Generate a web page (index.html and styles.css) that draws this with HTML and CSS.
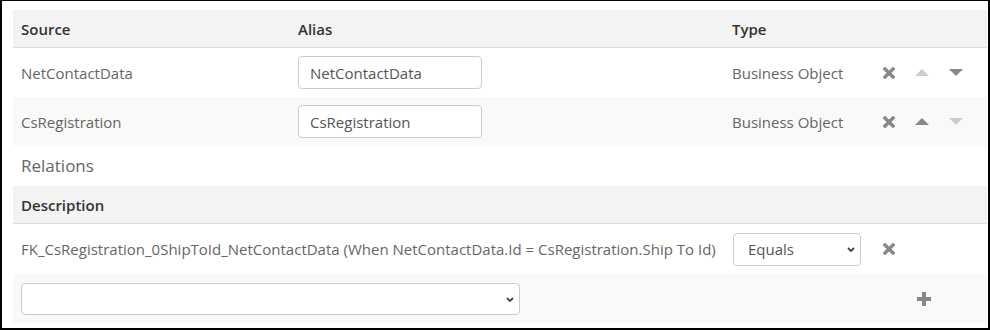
FILE: index.html
```html
<!DOCTYPE html>
<html lang="en">
<head>
    <meta charset="UTF-8" />
    <meta name="viewport" content="width=device-width, initial-scale=1" />
    <title>Sources and Relations</title>
    <link rel="stylesheet" href="styles.css">
</head>
<body>

<div class="panel">

    <!-- sources -->
    <div class="table">
        <div class="row head">
            <div class="cell">Source</div>
            <div class="cell">Alias</div>
            <div class="cell">Type</div>
            <div class="cell"></div>
        </div>
        <div class="row">
            <div class="cell">NetContactData</div>
            <div class="cell"><input class="alias" type="text" value="NetContactData" /></div>
            <div class="cell">Business Object</div>
            <div class="cell actions">
                <svg class="icon remove" viewBox="0 0 12 12"><path d="M2 2 L10 10 M10 2 L2 10" /></svg>
                <svg class="icon arrow off" viewBox="0 0 14 7"><polygon points="0,7 7,0 14,7" /></svg>
                <svg class="icon arrow" viewBox="0 0 14 7"><polygon points="0,0 14,0 7,7" /></svg>
            </div>
        </div>
        <div class="row alt">
            <div class="cell">CsRegistration</div>
            <div class="cell"><input class="alias" type="text" value="CsRegistration" /></div>
            <div class="cell">Business Object</div>
            <div class="cell actions">
                <svg class="icon remove" viewBox="0 0 12 12"><path d="M2 2 L10 10 M10 2 L2 10" /></svg>
                <svg class="icon arrow" viewBox="0 0 14 7"><polygon points="0,7 7,0 14,7" /></svg>
                <svg class="icon arrow off" viewBox="0 0 14 7"><polygon points="0,0 14,0 7,7" /></svg>
            </div>
        </div>
    </div>

    <h3 class="section-title">Relations</h3>

    <!-- relations -->
    <div class="table">
        <div class="row head rel-head">
            <div class="cell wide">Description</div>
        </div>
        <div class="row rel">
            <div class="cell wide">FK_CsRegistration_0ShipToId_NetContactData (When NetContactData.Id = CsRegistration.Ship To Id)</div>
            <div class="cell">
                <div class="select-wrap op">
                    <select class="select"><option>Equals</option></select>
                    <svg class="chevron" viewBox="0 0 8 5"><path d="M1 1 L4 4 L7 1" /></svg>
                </div>
            </div>
            <div class="cell actions">
                <svg class="icon remove" viewBox="0 0 12 12"><path d="M2 2 L10 10 M10 2 L2 10" /></svg>
            </div>
        </div>
        <div class="row alt">
            <div class="cell wide">
                <div class="select-wrap pick">
                    <select class="select"><option></option></select>
                    <svg class="chevron" viewBox="0 0 8 5"><path d="M1 1 L4 4 L7 1" /></svg>
                </div>
            </div>
            <div class="cell"></div>
            <div class="cell actions">
                <span class="spacer"></span>
                <svg class="icon plus" viewBox="0 0 14 14"><polygon points="5,0 9,0 9,5 14,5 14,9 9,9 9,14 5,14 5,9 0,9 0,5 5,5" /></svg>
            </div>
        </div>
    </div>

</div>

</body>
</html>
```

FILE: styles.css
```css
* {
    box-sizing: border-box;
    margin: 0;
    padding: 0;
}
body {
    font-family: 'Open Sans', sans-serif;
    font-size: 15px;
    color: #666;
    background: #fff;
}
.panel {
    width: 990px;
    border: solid #000;
    border-width: 1px 2px 2px 2px;
    padding: 9px 1px 5px 11px;
}
.row {
    display: grid;
    grid-template-columns: 277px 434px 151px 1fr;
    align-items: center;
    height: 49px;
}
.row.alt {
    background: #f9f9f9;
}
.row.head {
    height: 38px;
    background: #f3f3f3;
    border-bottom: 1px solid #dddddd;
    color: #333;
    font-weight: 600;
}
.row.rel {
    height: 50px;
}
.cell {
    padding: 0 8px;
    white-space: nowrap;
}
.cell.wide {
    grid-column: span 2;
}
.alias {
    width: 184px;
    height: 33px;
    padding: 0 11px;
    border: 1px solid #ccc;
    border-radius: 4px;
    font-family: 'Open Sans', sans-serif;
    font-size: 15px;
    color: #555;
    background: #fff;
    outline: none;
}
.section-title {
    height: 40px;
    padding: 8px 8px 0;
    font-size: 17px;
    font-weight: 400;
    color: #666;
}
.actions {
    display: flex;
    align-items: center;
    gap: 20px;
}
.icon {
    display: block;
}
.icon.remove {
    width: 12px;
    height: 12px;
    stroke: #888;
    stroke-width: 3.4;
    stroke-linecap: square;
    fill: none;
}
.icon.arrow {
    width: 14px;
    height: 7px;
    fill: #888;
}
.icon.arrow.off {
    fill: #ccc;
}
.icon.plus {
    width: 14px;
    height: 14px;
    fill: #888;
}
.spacer {
    width: 14px;
}
.select-wrap {
    position: relative;
}
.select-wrap.op {
    width: 128px;
    margin-left: 1px;
}
.select-wrap.pick {
    width: 499px;
}
.select {
    display: block;
    width: 100%;
    appearance: none;
    -webkit-appearance: none;
    border: 1px solid #ccc;
    border-radius: 4px;
    background: #fff;
    font-family: 'Open Sans', sans-serif;
    font-size: 15px;
    color: #555;
    padding: 0 14px;
    outline: none;
}
.op .select {
    height: 33px;
}
.pick .select {
    height: 32px;
}
.chevron {
    position: absolute;
    right: 6px;
    top: 50%;
    width: 8px;
    height: 5px;
    margin-top: -2px;
    fill: none;
    stroke: #444;
    stroke-width: 1.8;
}
```
